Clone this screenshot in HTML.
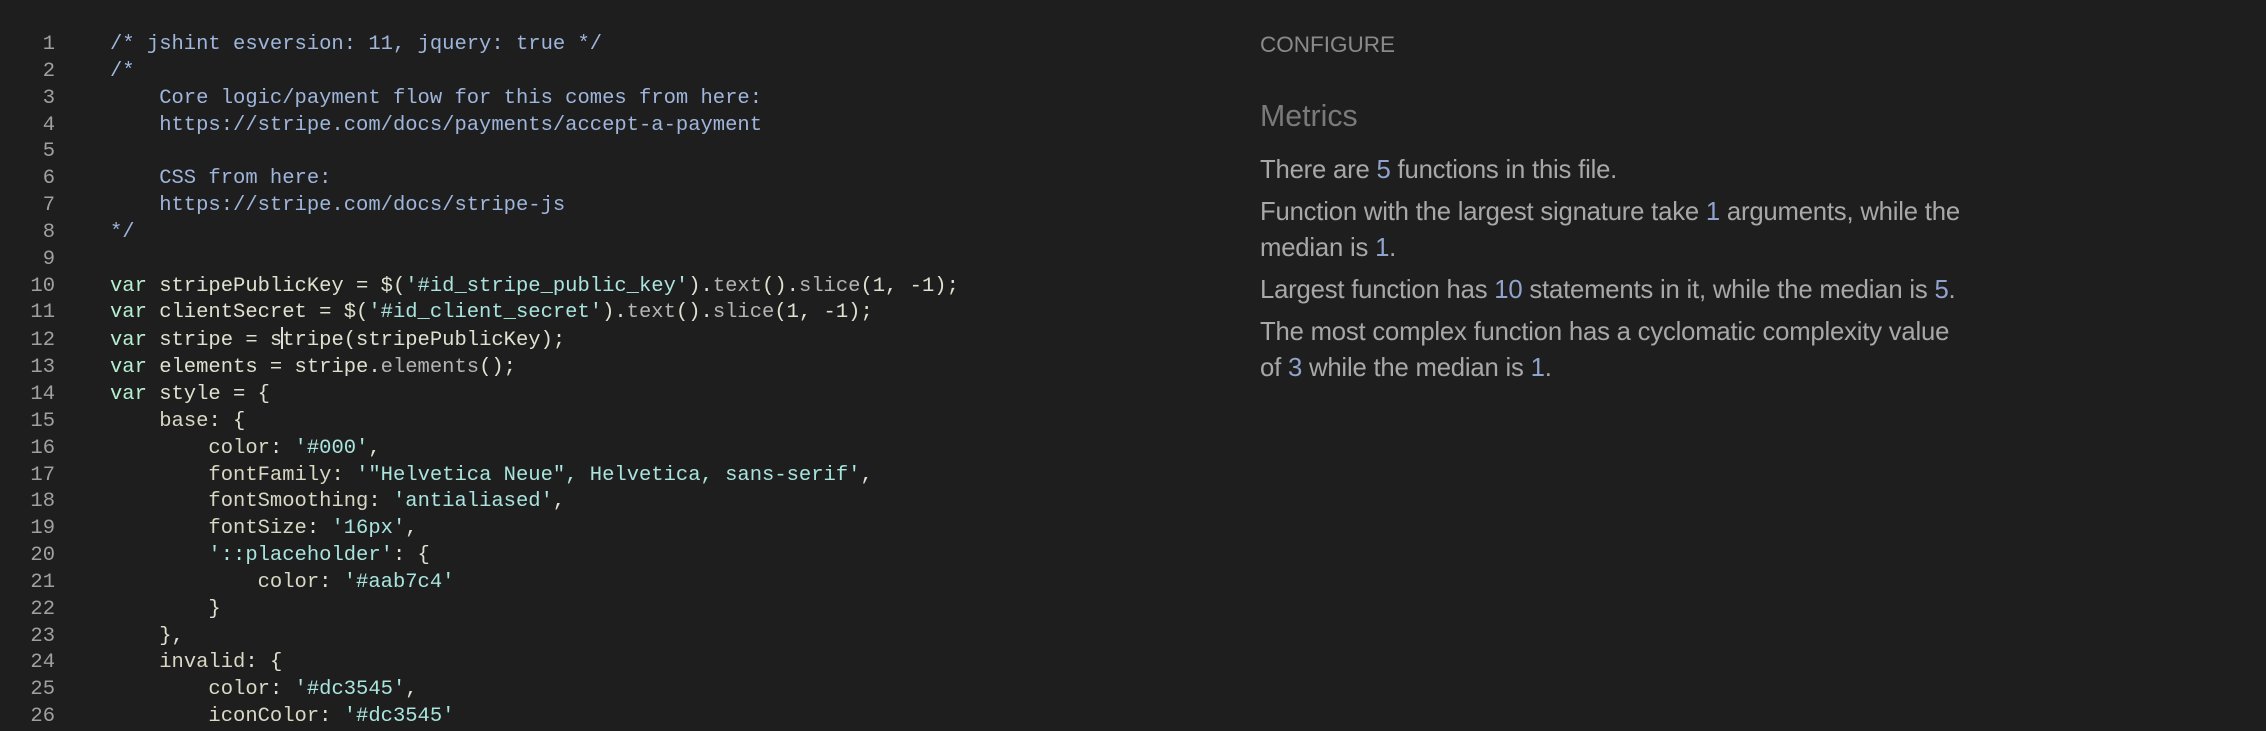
<!DOCTYPE html>
<html><head><meta charset="utf-8"><style>
html,body{margin:0;padding:0;background:#1e1e1e;width:2266px;height:726px;overflow:hidden}
#code{position:absolute;left:0;top:32px;font-family:"Liberation Mono",monospace;font-size:20.5px;line-height:26.85px;white-space:pre;color:#e0e0d0}
.ln{display:inline-block;width:55px;text-align:right;color:#a0a0a0;margin-right:55px}
.c{color:#9fb6dc}.k{color:#b5efd0}.s{color:#a9e4de}.p{color:#e6e6d8}.m{color:#b4b4b4}.y{color:#d8d8c4}
#cur{display:inline-block;width:2px;height:22px;background:#ddd;vertical-align:-4px;margin:0 -1px}
#side{position:absolute;left:1260px;top:0;font-family:"Liberation Sans",sans-serif;color:#a8a8a8}
.cfg{position:absolute;top:32px;font-size:22.5px;color:#8a8a8a;white-space:nowrap}
.met{position:absolute;top:100px;font-size:30.3px;color:#7a7a7a;white-space:nowrap}
.par{position:absolute;font-size:25.7px;line-height:36px;white-space:nowrap;letter-spacing:-0.2px}
.n{color:#8fa3cc}
</style></head><body>
<div id="code"><span class="ln">1</span><span class="c">/* jshint esversion: 11, jquery: true */</span>
<span class="ln">2</span><span class="c">/*</span>
<span class="ln">3</span><span class="c">    Core logic/payment flow for this comes from here:</span>
<span class="ln">4</span><span class="c">    https://stripe.com/docs/payments/accept-a-payment</span>
<span class="ln">5</span>
<span class="ln">6</span><span class="c">    CSS from here:</span>
<span class="ln">7</span><span class="c">    https://stripe.com/docs/stripe-js</span>
<span class="ln">8</span><span class="c">*/</span>
<span class="ln">9</span>
<span class="ln">10</span><span class="k">var</span> stripePublicKey = $(<span class="s">'#id_stripe_public_key'</span>).<span class="m">text</span>().<span class="m">slice</span>(1, -1);
<span class="ln">11</span><span class="k">var</span> clientSecret = $(<span class="s">'#id_client_secret'</span>).<span class="m">text</span>().<span class="m">slice</span>(1, -1);
<span class="ln">12</span><span class="k">var</span> stripe = s<span id="cur"></span>tripe(stripePublicKey);
<span class="ln">13</span><span class="k">var</span> elements = stripe.<span class="m">elements</span>();
<span class="ln">14</span><span class="k">var</span> style = {
<span class="ln">15</span>    <span class="y">base</span>: {
<span class="ln">16</span>        <span class="y">color</span>: <span class="s">'#000'</span>,
<span class="ln">17</span>        <span class="y">fontFamily</span>: <span class="s">'"Helvetica Neue", Helvetica, sans-serif'</span>,
<span class="ln">18</span>        <span class="y">fontSmoothing</span>: <span class="s">'antialiased'</span>,
<span class="ln">19</span>        <span class="y">fontSize</span>: <span class="s">'16px'</span>,
<span class="ln">20</span>        <span class="s">'::placeholder'</span>: {
<span class="ln">21</span>            <span class="y">color</span>: <span class="s">'#aab7c4'</span>
<span class="ln">22</span>        }
<span class="ln">23</span>    },
<span class="ln">24</span>    <span class="y">invalid</span>: {
<span class="ln">25</span>        <span class="y">color</span>: <span class="s">'#dc3545'</span>,
<span class="ln">26</span>        <span class="y">iconColor</span>: <span class="s">'#dc3545'</span></div>
<div id="side">
<div class="cfg">CONFIGURE</div>
<div class="met">Metrics</div>
<div class="par" style="top:152px">There are <span class="n">5</span> functions in this file.</div>
<div class="par" style="top:194px">Function with the largest signature take <span class="n">1</span> arguments, while the<br>median is <span class="n">1</span>.</div>
<div class="par" style="top:272px">Largest function has <span class="n">10</span> statements in it, while the median is <span class="n">5</span>.</div>
<div class="par" style="top:314px">The most complex function has a cyclomatic complexity value<br>of <span class="n">3</span> while the median is <span class="n">1</span>.</div>
</div>
</body></html>
